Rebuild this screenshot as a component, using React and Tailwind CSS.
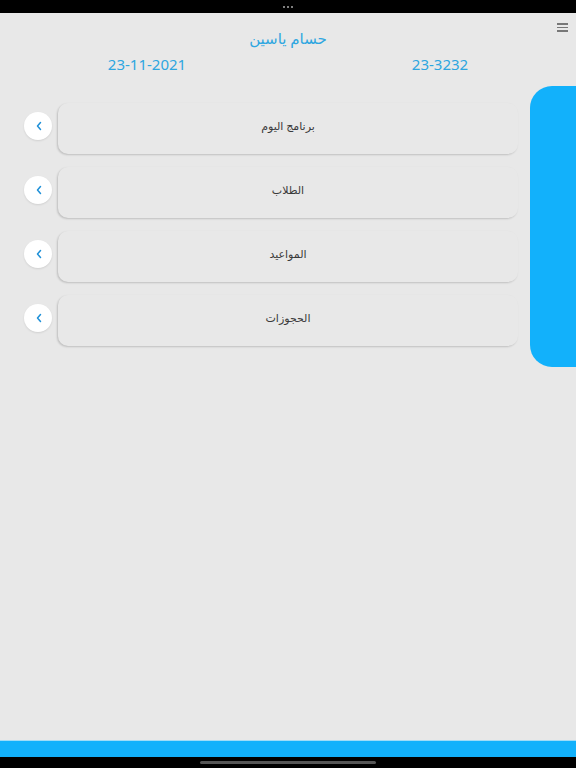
const items = ["برنامج اليوم", "الطلاب", "المواعيد", "الحجوزات"]

function Chevron({ className }) {
  return (
    <svg viewBox="0 0 24 24" className={className} fill="none" stroke="#1e90d8" strokeWidth="3" strokeLinecap="round" strokeLinejoin="round">
      <polyline points="15 5 9 12 15 19" />
    </svg>
  )
}

function MenuRow({ label }) {
  return (
    <div className="flex items-start">
      <button className="mt-[9px] flex h-[28px] w-[28px] items-center justify-center rounded-full bg-white shadow-[0_1px_2px_rgba(0,0,0,0.1)]">
        <Chevron className="ml-[2px] h-[12px] w-[12px]" />
      </button>
      <div className="ml-[6px] h-[51px] w-[460px] rounded-[10px] bg-[#e8e8e8] pt-[13px] text-center text-[11px] leading-[20px] text-[#3a3a3a] shadow-[-1px_1px_2px_rgba(0,0,0,0.18)]">
        {label}
      </div>
    </div>
  )
}

export default function App() {
  return (
    <div className="flex h-[768px] w-[576px] flex-col bg-[#e8e8e8] font-['Noto_Sans','DejaVu_Sans',sans-serif]">
      {/* status bar */}
      <div className="flex h-[13px] items-center justify-center gap-[2px] bg-black">
        <span className="h-[2px] w-[2px] rounded-full bg-[#aaa]" />
        <span className="h-[2px] w-[2px] rounded-full bg-[#aaa]" />
        <span className="h-[2px] w-[2px] rounded-full bg-[#aaa]" />
      </div>

      <div className="relative flex-1">
        <div className="absolute right-[8px] top-[10px] flex flex-col gap-[2px]">
          <span className="h-[1.5px] w-[11px] bg-[#777]" />
          <span className="h-[1.5px] w-[11px] bg-[#777]" />
          <span className="h-[1.5px] w-[11px] bg-[#777]" />
        </div>

        <div className="pt-[15px] text-center text-[15px] leading-[20px] text-[#2ea6e0]">
          حسام ياسين
        </div>

        <div className="mt-[6px] flex text-[15px] leading-[20px] text-[#2ea6e0]">
          <div className="w-[294px] text-center">23-11-2021</div>
          <div className="w-[282px] pl-[10px] text-center">23-3232</div>
        </div>

        <div className="mt-[12px] flex">
          <div className="mt-[17px] flex flex-col gap-[13px] pl-[24px]">
            {items.map((label) => (
              <MenuRow key={label} label={label} />
            ))}
          </div>
          <div className="ml-[12px] h-[281px] w-[46px] rounded-l-[22px] bg-[#12b1fb]" />
        </div>
      </div>

      <div className="h-[17px] border-t border-[#9fdcf7] bg-[#12b1fb]" />
      <div className="flex h-[11px] items-center justify-center bg-black">
        <span className="h-[3px] w-[176px] rounded-full bg-[#555]" />
      </div>
    </div>
  )
}
